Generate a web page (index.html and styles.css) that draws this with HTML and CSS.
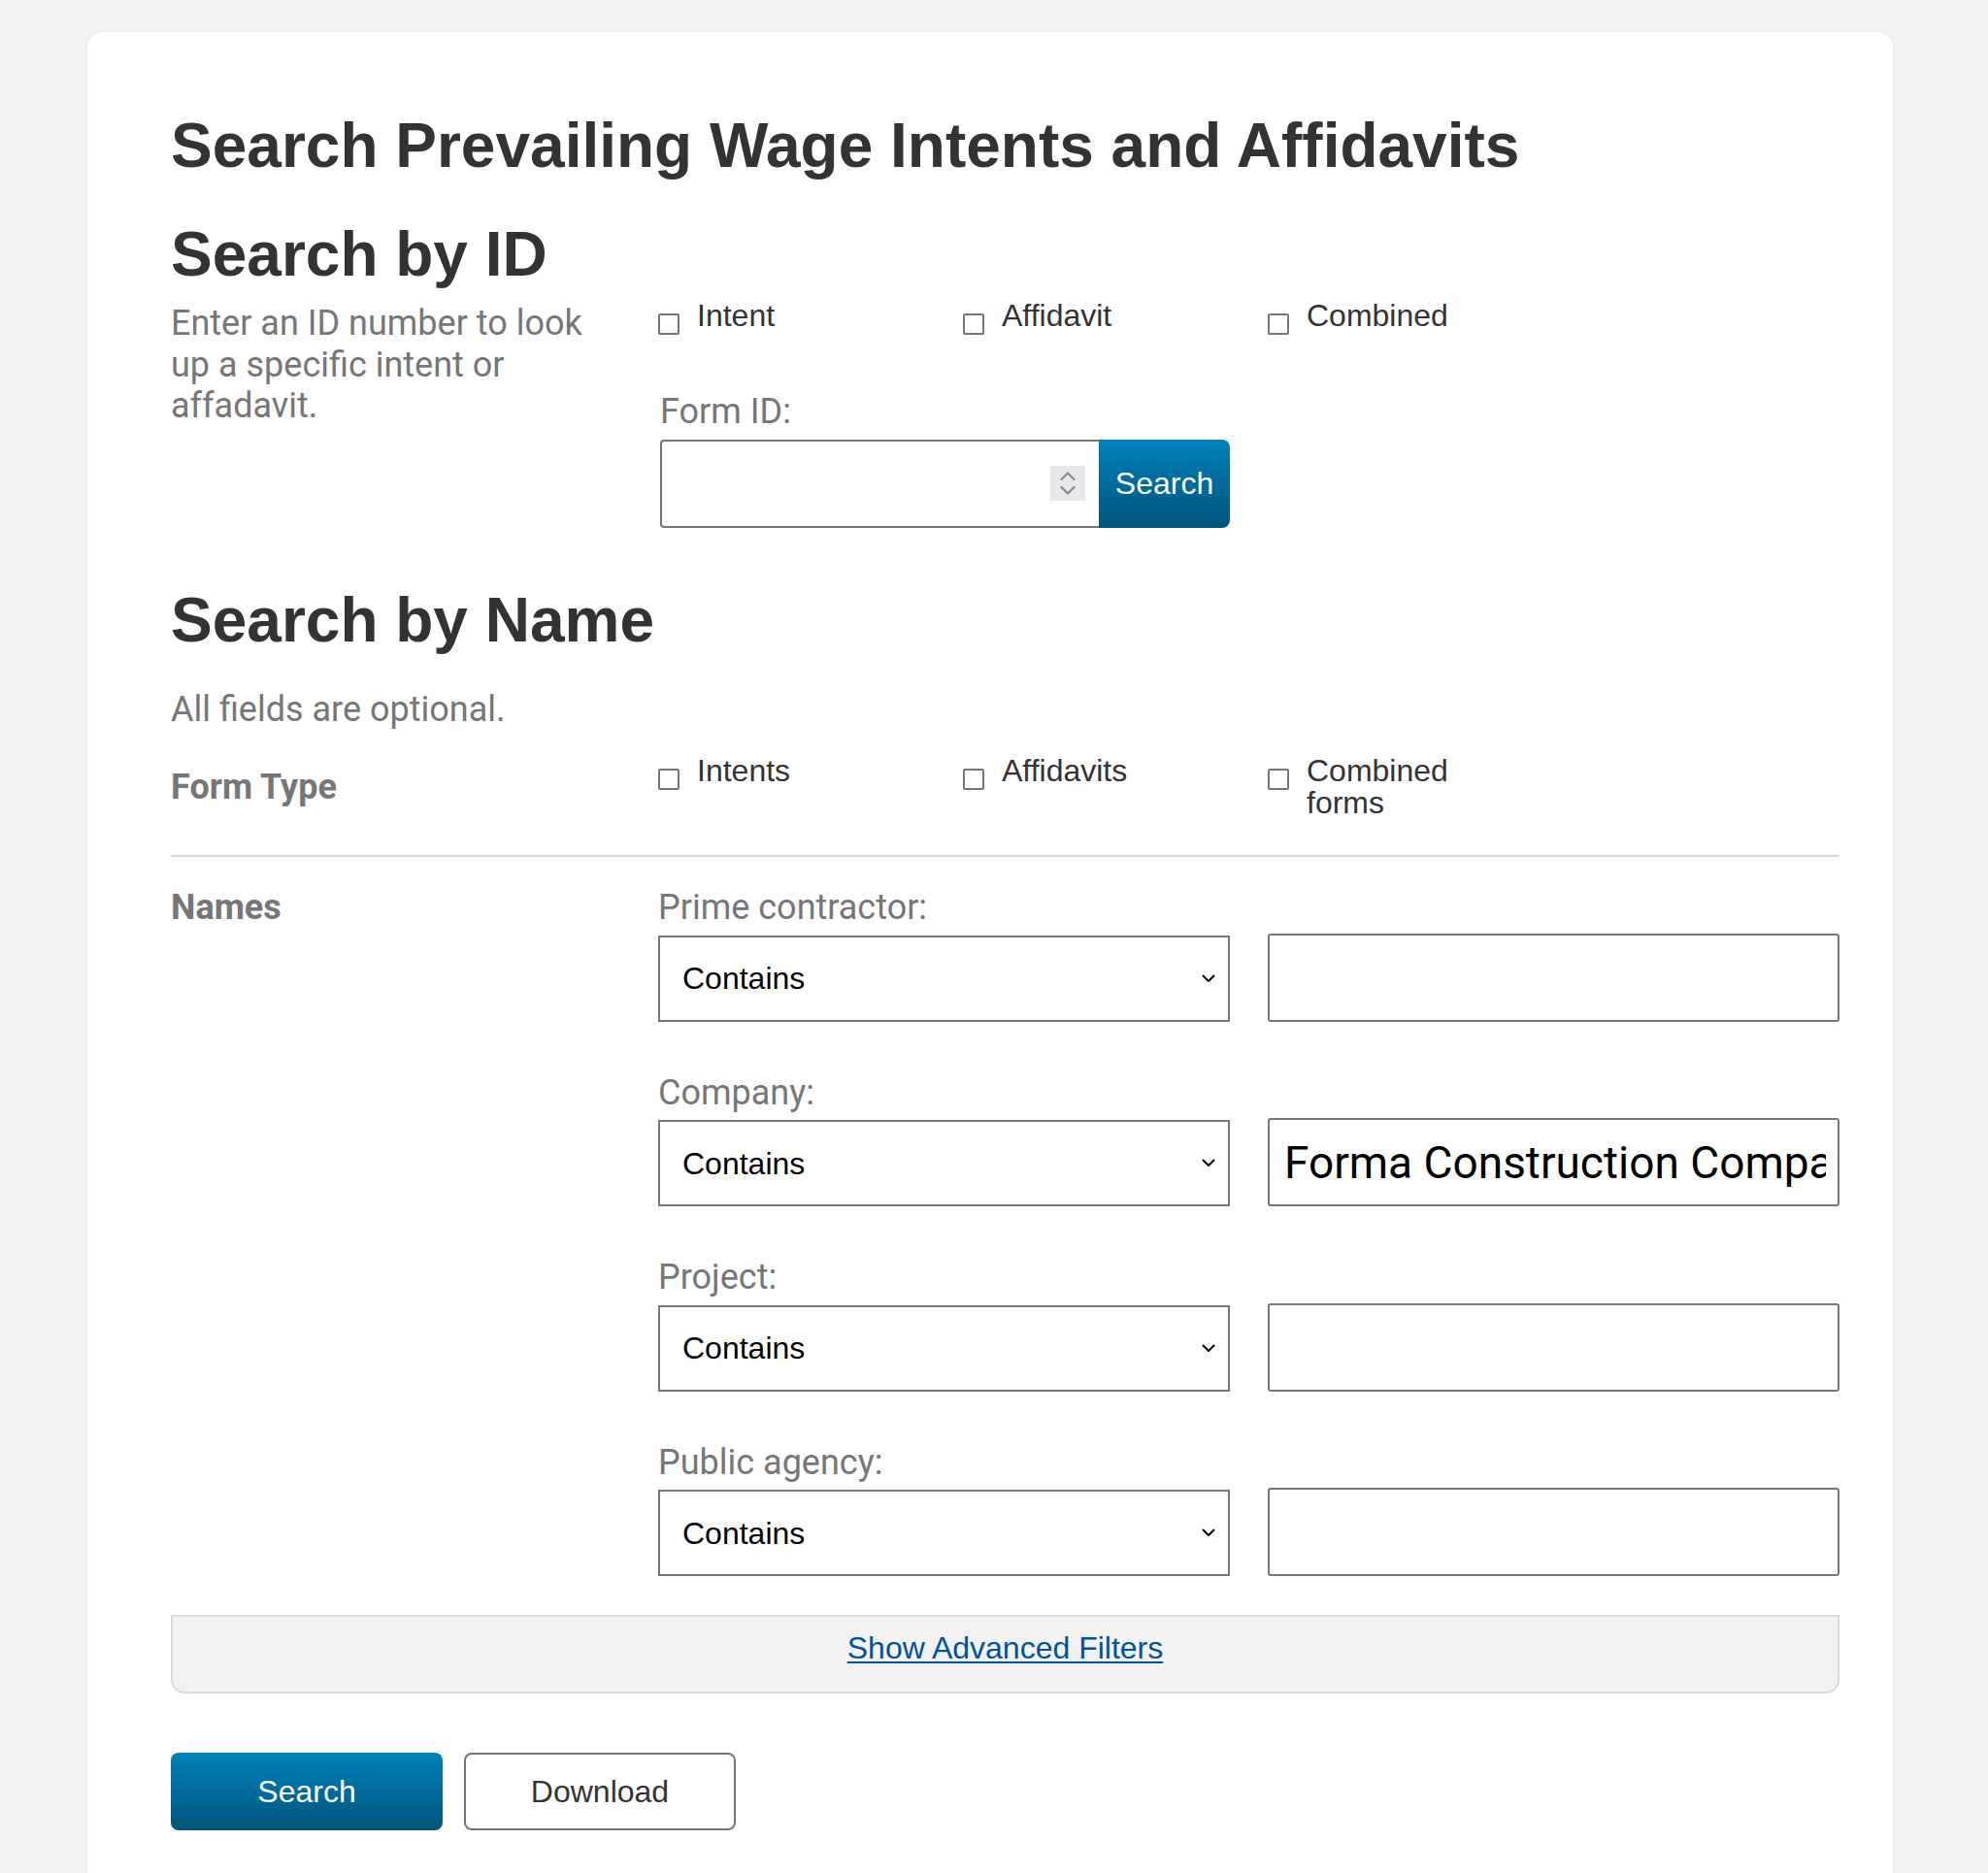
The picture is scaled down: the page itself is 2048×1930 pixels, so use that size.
FILE: index.html
```html
<!DOCTYPE html>
<html lang="en">
<head>
  <meta charset="UTF-8">
  <title>Search Prevailing Wage Intents and Affidavits</title>
  <link rel="stylesheet" href="styles.css">
</head>
<body>
  <main class="card">
    <h1>Search Prevailing Wage Intents and Affidavits</h1>

    <h2 class="by-id">Search by ID</h2>
    <section class="grid id-grid">
      <p class="hint">Enter an ID number to look up a specific intent or affadavit.</p>
      <label class="check"><input type="checkbox"><span>Intent</span></label>
      <label class="check"><input type="checkbox"><span>Affidavit</span></label>
      <label class="check"><input type="checkbox"><span>Combined</span></label>

      <div class="form-id">
        <label class="field-label" for="form-id">Form ID:</label>
        <div class="id-group">
          <div class="number-box">
            <input type="number" id="form-id">
            <span class="spinner">
              <svg width="36" height="36" viewBox="0 0 36 36">
                <rect width="36" height="36" fill="#e7e7ec"/>
                <path d="M11.5 14 L18 7.5 L24.5 14" fill="none" stroke="#8c8c92" stroke-width="2.4" stroke-linecap="round" stroke-linejoin="round"/>
                <path d="M11.5 22 L18 28.5 L24.5 22" fill="none" stroke="#8c8c92" stroke-width="2.4" stroke-linecap="round" stroke-linejoin="round"/>
              </svg>
            </span>
          </div>
          <button type="button" class="btn-primary id-search">Search</button>
        </div>
      </div>
    </section>

    <h2 class="by-name">Search by Name</h2>
    <p class="hint optional">All fields are optional.</p>

    <section class="grid type-row">
      <div class="row-label type-label">Form Type</div>
      <label class="check"><input type="checkbox"><span>Intents</span></label>
      <label class="check"><input type="checkbox"><span>Affidavits</span></label>
      <label class="check"><input type="checkbox"><span>Combined forms</span></label>
    </section>

    <section class="grid names-row">
      <div class="row-label">Names</div>
      <div class="fields">
        <div class="field">
          <label class="field-label">Prime contractor:</label>
          <div class="select-box">
            <select><option>Contains</option><option>Starts with</option><option>Equals</option></select>
            <svg width="14" height="9" viewBox="0 0 14 9"><path d="M1.5 1.5 L7 7 L12.5 1.5" fill="none" stroke="#000" stroke-width="2" stroke-linecap="round" stroke-linejoin="round"/></svg>
          </div>
          <input class="text-box" type="text">
        </div>

        <div class="field">
          <label class="field-label">Company:</label>
          <div class="select-box">
            <select><option>Contains</option><option>Starts with</option><option>Equals</option></select>
            <svg width="14" height="9" viewBox="0 0 14 9"><path d="M1.5 1.5 L7 7 L12.5 1.5" fill="none" stroke="#000" stroke-width="2" stroke-linecap="round" stroke-linejoin="round"/></svg>
          </div>
          <input class="text-box" type="text" value="Forma Construction Company">
        </div>

        <div class="field">
          <label class="field-label">Project:</label>
          <div class="select-box">
            <select><option>Contains</option><option>Starts with</option><option>Equals</option></select>
            <svg width="14" height="9" viewBox="0 0 14 9"><path d="M1.5 1.5 L7 7 L12.5 1.5" fill="none" stroke="#000" stroke-width="2" stroke-linecap="round" stroke-linejoin="round"/></svg>
          </div>
          <input class="text-box" type="text">
        </div>

        <div class="field">
          <label class="field-label">Public agency:</label>
          <div class="select-box">
            <select><option>Contains</option><option>Starts with</option><option>Equals</option></select>
            <svg width="14" height="9" viewBox="0 0 14 9"><path d="M1.5 1.5 L7 7 L12.5 1.5" fill="none" stroke="#000" stroke-width="2" stroke-linecap="round" stroke-linejoin="round"/></svg>
          </div>
          <input class="text-box" type="text">
        </div>
      </div>
    </section>

    <div class="advanced">
      <a href="#" class="advanced-link">Show Advanced Filters</a>
    </div>

    <div class="actions">
      <button type="button" class="btn-primary btn-large">Search</button>
      <button type="button" class="btn-outline btn-large">Download</button>
    </div>
  </main>
</body>
</html>
```

FILE: styles.css
```css
body {
  margin: 0;
  background: #f2f2f2;
  font-family: Roboto, "Liberation Sans", Arial, sans-serif;
  color: #333;
}

.card {
  margin: 33px 98px 0 90px;
  padding: 80px 55px 90px 86px;
  background: #fff;
  border-radius: 16px;
  box-shadow: 0 1px 5px rgba(0,0,0,0.07);
}

h1, h2 {
  font-family: "Liberation Sans", Arial, sans-serif;
  font-weight: bold;
  font-size: 64px;
  line-height: 74px;
  color: #333;
  margin: 0;
}

h2.by-id {
  margin: 38px 0 10px;
}

h2.by-name {
  margin-top: 58px;
}

.hint {
  margin: 0;
  font-size: 36px;
  line-height: 42.5px;
  color: #767676;
}

.hint.optional {
  margin-top: 34px;
}

.grid {
  display: grid;
  grid-template-columns: 463px repeat(4, 1fr);
  column-gap: 39px;
}

.id-grid {
  row-gap: 58px;
}

.id-grid .hint {
  grid-column: 1;
  grid-row: 1 / span 2;
  margin-top: 3px;
}

.check {
  display: flex;
  align-items: flex-start;
  gap: 18px;
  padding-right: 16px;
  font-family: "Liberation Sans", Arial, sans-serif;
  font-size: 32px;
  line-height: 33px;
  color: #333;
}

.check input {
  appearance: none;
  -webkit-appearance: none;
  flex-shrink: 0;
  width: 22px;
  height: 22px;
  margin: 14px 0 0;
  border: 2px solid #767676;
  border-radius: 2px;
  background: #fff;
}

.form-id {
  grid-column: 2 / span 2;
  grid-row: 2;
  padding-left: 2px;
}

.field-label {
  display: block;
  font-size: 36px;
  line-height: 42.5px;
  color: #767676;
  margin-bottom: 5px;
}

.form-id .field-label {
  margin-bottom: 7px;
}

.id-group {
  display: flex;
  height: 91px;
  width: 587px;
}

.number-box {
  flex: 1;
  min-width: 0;
  display: flex;
  align-items: center;
  border: 2px solid #777;
  border-right: none;
  border-radius: 4px 0 0 4px;
  padding-right: 14px;
  background: #fff;
}

.number-box input {
  flex: 1;
  width: 0;
  min-width: 0;
  height: 100%;
  border: none;
  outline: none;
  background: transparent;
  font-size: 36px;
  padding: 0 16px;
  -moz-appearance: textfield;
}

.number-box input::-webkit-inner-spin-button,
.number-box input::-webkit-outer-spin-button {
  -webkit-appearance: none;
  margin: 0;
}

.spinner {
  display: flex;
  flex-shrink: 0;
}

.btn-primary {
  border: none;
  background: linear-gradient(to bottom, #0081bb, #00557a);
  color: #fff;
  font-family: "Liberation Sans", Arial, sans-serif;
  font-size: 32px;
  cursor: pointer;
}

.id-search {
  flex-shrink: 0;
  width: 135px;
  border-radius: 0 8px 8px 0;
  padding: 0;
}

.type-row {
  margin-top: 26px;
  padding-bottom: 37px;
  border-bottom: 2px solid #d8d8d8;
}

.row-label {
  grid-column: 1;
  font-size: 36px;
  line-height: 42.5px;
  font-weight: bold;
  color: #767676;
}

.type-label {
  margin-top: 12px;
}

.names-row {
  margin-top: 31px;
}

.fields {
  grid-column: 2 / 6;
  display: flex;
  flex-direction: column;
  gap: 52px;
}

.field {
  display: grid;
  grid-template-columns: 1fr 1fr;
  column-gap: 39px;
}

.field .field-label {
  grid-column: 1 / -1;
}

.select-box {
  align-self: end;
  display: flex;
  align-items: center;
  height: 89px;
  box-sizing: border-box;
  border: 2px solid #777;
  padding-right: 13px;
  background: #fff;
}

.select-box select {
  appearance: none;
  -webkit-appearance: none;
  flex: 1;
  height: 100%;
  border: none;
  outline: none;
  background: transparent;
  padding: 0 0 0 23px;
  font-family: "Liberation Sans", Arial, sans-serif;
  font-size: 32px;
  color: #000;
}

.text-box {
  align-self: end;
  height: 91px;
  width: 100%;
  box-sizing: border-box;
  border: 2px solid #777;
  border-radius: 3px;
  padding: 0 12px 0 15px;
  font-family: Roboto, sans-serif;
  font-size: 46px;
  color: #000;
  outline: none;
  background: #fff;
}

.advanced {
  margin-top: 40px;
  padding: 14px 0 27px;
  border: 2px solid #dadada;
  border-radius: 0 0 14px 14px;
  background: #f2f2f2;
  text-align: center;
  font-family: "Liberation Sans", Arial, sans-serif;
  font-size: 32px;
  line-height: 36px;
}

.advanced-link {
  color: #00529b;
  text-decoration: underline;
  text-decoration-thickness: 2px;
  text-underline-offset: 3px;
}

.actions {
  display: flex;
  gap: 22px;
  margin-top: 61px;
}

.btn-large {
  width: 280px;
  height: 80px;
  border-radius: 8px;
}

.btn-outline {
  background: #fff;
  border: 2px solid #767676;
  color: #333;
  font-family: "Liberation Sans", Arial, sans-serif;
  font-size: 32px;
  cursor: pointer;
}
```
